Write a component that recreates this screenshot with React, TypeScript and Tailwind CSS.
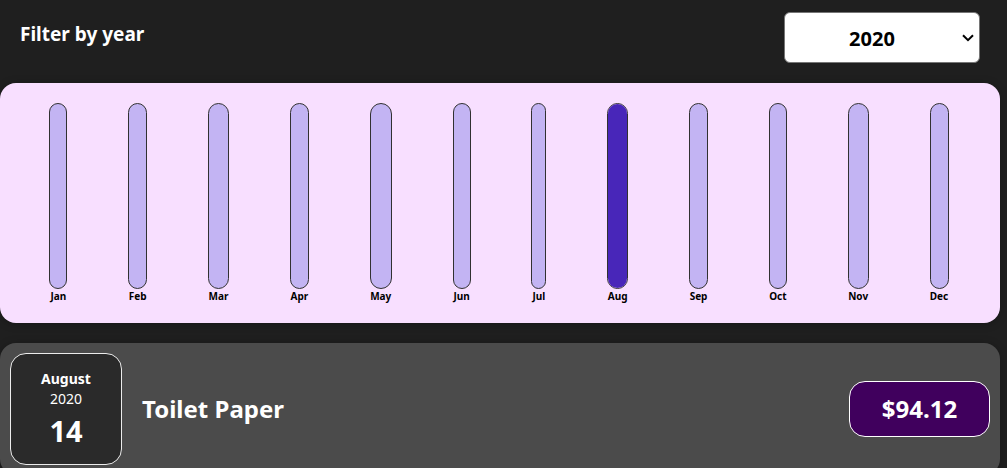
import { useState } from "react";

const months = [
  { label: "Jan", width: "w-[18px]", fill: 0 },
  { label: "Feb", width: "w-[19px]", fill: 0 },
  { label: "Mar", width: "w-[21px]", fill: 0 },
  { label: "Apr", width: "w-[19px]", fill: 0 },
  { label: "May", width: "w-[22px]", fill: 0 },
  { label: "Jun", width: "w-[18px]", fill: 0 },
  { label: "Jul", width: "w-[15px]", fill: 0 },
  { label: "Aug", width: "w-[21px]", fill: 100 },
  { label: "Sep", width: "w-[19px]", fill: 0 },
  { label: "Oct", width: "w-[18px]", fill: 0 },
  { label: "Nov", width: "w-[21px]", fill: 0 },
  { label: "Dec", width: "w-[19px]", fill: 0 },
];

function YearFilter() {
  const [year, setYear] = useState("2020");
  return (
    <div className="flex items-start justify-between px-5 pt-3">
      <label htmlFor="year" className="pt-2 text-[19px] leading-7 font-bold text-white">
        Filter by year
      </label>
      <div className="relative">
        <select
          id="year"
          value={year}
          onChange={(e) => setYear(e.target.value)}
          className="h-[51px] w-[196px] appearance-none rounded-md border border-[#767676] bg-white pt-0.5 pr-5 text-center text-xl font-bold text-black"
        >
          <option>2022</option>
          <option>2021</option>
          <option>2020</option>
          <option>2019</option>
        </select>
        <svg
          viewBox="0 0 12 8"
          className="pointer-events-none absolute top-[22px] right-[6px] h-2 w-3"
          fill="none"
          stroke="#000"
          strokeWidth="2"
          aria-hidden="true"
        >
          <path d="M1 1.2 6 6.2 11 1.2" />
        </svg>
      </div>
    </div>
  );
}

function Chart() {
  return (
    <div className="mt-5 flex h-60 justify-around rounded-2xl bg-[#f8dfff] py-5 pr-[21px] pl-[19px] text-center shadow-[0_1px_8px_rgba(0,0,0,0.25)]">
      {months.map((m) => (
        <div key={m.label} className={`flex flex-col items-center ${m.width}`}>
          <div className="flex w-full flex-1 flex-col justify-end overflow-hidden rounded-xl border border-[#313131] bg-[#c3b4f3]">
            <div className="bg-[#4826b9]" style={{ height: `${m.fill}%` }} />
          </div>
          <div className="text-[10px] leading-[14px] font-bold whitespace-nowrap text-black">{m.label}</div>
        </div>
      ))}
    </div>
  );
}

function ExpenseItem() {
  return (
    <li className="flex items-center gap-5 rounded-2xl bg-[#4b4b4b] p-[10px] text-white shadow-[0_1px_8px_rgba(0,0,0,0.25)]">
      <time
        dateTime="2020-08-14"
        className="flex size-28 flex-col items-center justify-center rounded-2xl border border-[#ececec] bg-[#2a2a2a] pt-0.5"
      >
        <span className="text-[14px] leading-5 font-bold">August</span>
        <span className="text-[14px] leading-5">2020</span>
        <span className="mt-0.5 text-[29px] leading-10 font-bold">14</span>
      </time>
      <h2 className="flex-1 text-2xl font-bold">Toilet Paper</h2>
      <div className="flex h-14 w-[141px] items-center justify-center rounded-2xl border border-white bg-[#40005d] text-2xl font-bold">
        $94.12
      </div>
    </li>
  );
}

export default function App() {
  return (
    <div className="min-h-screen bg-[#1f1f1f] pr-[7px] font-['Noto_Sans','Open_Sans',sans-serif]">
      <YearFilter />
      <Chart />
      <ul className="mt-5">
        <ExpenseItem />
      </ul>
    </div>
  );
}
